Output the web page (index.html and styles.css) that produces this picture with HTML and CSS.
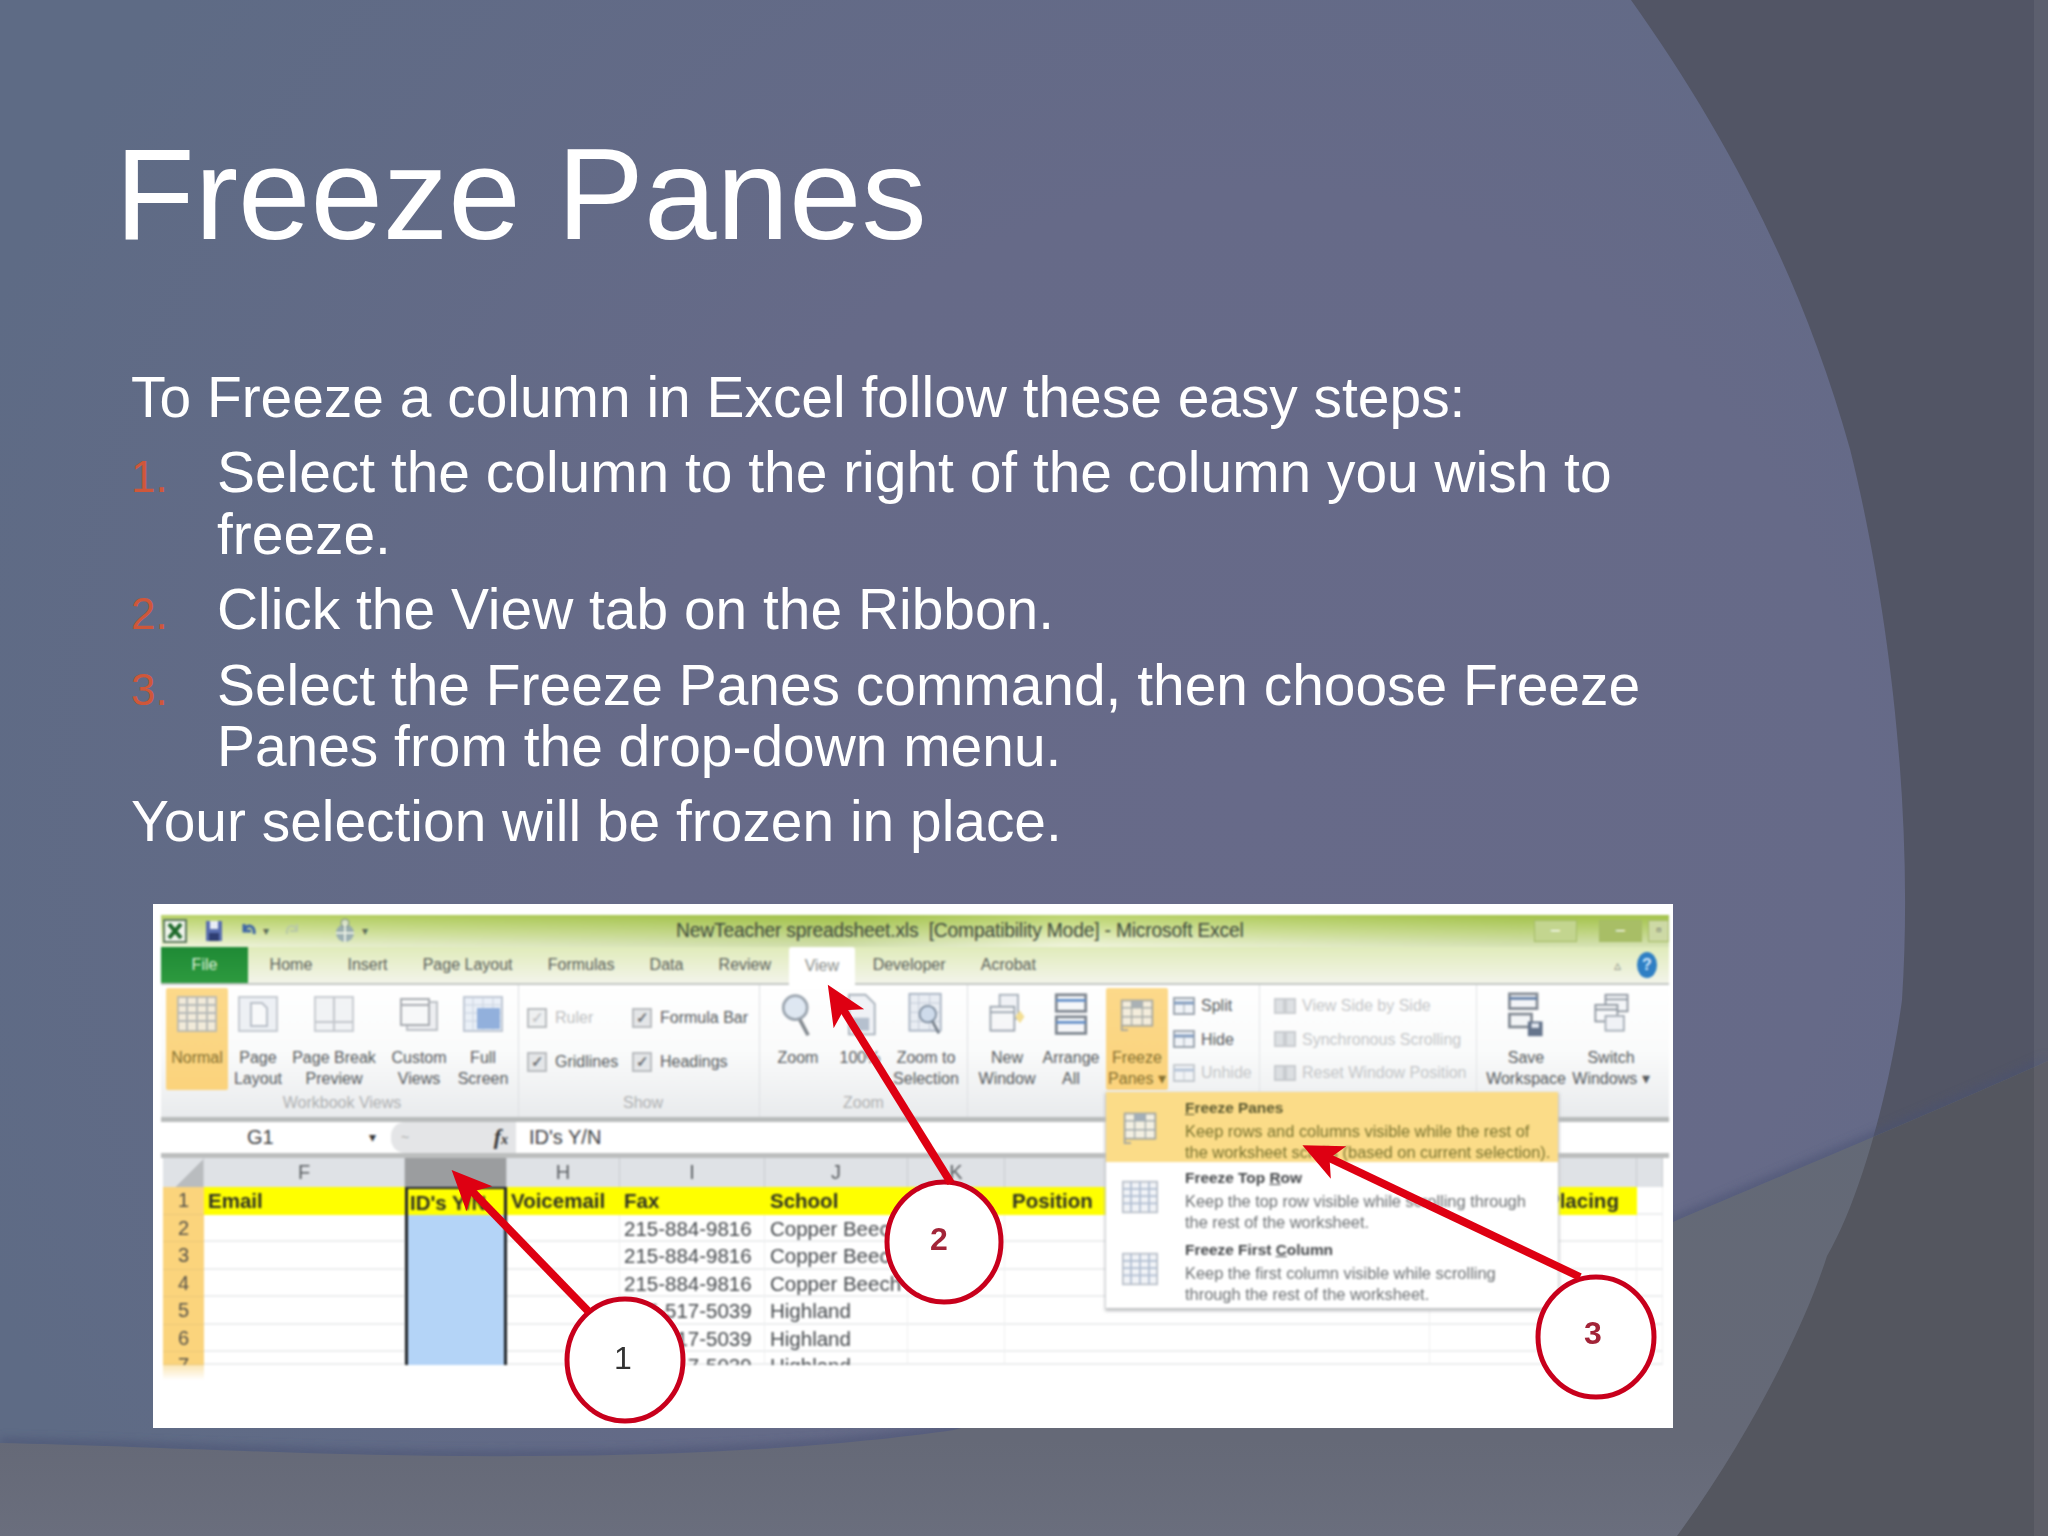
FILE: index.html
```html
<!DOCTYPE html>
<html lang="en">
<head>
<meta charset="utf-8">
<title>Freeze Panes</title>
<link rel="stylesheet" href="styles.css">
</head>
<body>
<svg class="bg" viewBox="0 0 2048 1536" aria-hidden="true">
  <defs>
    <radialGradient id="base" gradientUnits="userSpaceOnUse" cx="1250" cy="800" r="1350">
      <stop offset="0" stop-color="#676a89"/><stop offset=".45" stop-color="#666a88"/><stop offset="1" stop-color="#5e6b85"/>
    </radialGradient>
    <linearGradient id="band" x1="0" y1="0" x2="0" y2="1">
      <stop offset="0" stop-color="#636976"/><stop offset=".8" stop-color="#656977"/><stop offset="1" stop-color="#6a6e7d"/>
    </linearGradient>
    <filter id="soft" x="-5%" y="-20%" width="110%" height="140%"><feGaussianBlur stdDeviation="5"/></filter>
    <clipPath id="bandClip"><path d="M0 1443C150 1446 350 1458 533 1456C700 1456 850 1445 954 1430C1200 1360 1450 1290 1673 1222C1760 1185 1950 1105 2048 1061L2048 1536L0 1536Z"/></clipPath>
  </defs>
  <rect width="2048" height="1536" fill="url(#base)"/>
  <path d="M1631 0C1720 125 1800 270 1850 449C1885 590 1915 800 1902 1000C1890 1090 1860 1200 1827 1256C1800 1340 1740 1450 1677 1536L2048 1536L2048 0Z" fill="#525565"/>
  <path d="M0 1443C150 1446 350 1458 533 1456C700 1456 850 1445 954 1430C1200 1360 1450 1290 1673 1222C1760 1185 1950 1105 2048 1061" fill="none" stroke="#4a5172" stroke-width="9" opacity=".7" filter="url(#soft)"/>
  <path d="M0 1443C150 1446 350 1458 533 1456C700 1456 850 1445 954 1430C1200 1360 1450 1290 1673 1222C1760 1185 1950 1105 2048 1061L2048 1536L0 1536Z" fill="url(#band)"/>
  <path clip-path="url(#bandClip)" d="M1631 0C1720 125 1800 270 1850 449C1885 590 1915 800 1902 1000C1890 1090 1860 1200 1827 1256C1800 1340 1740 1450 1677 1536L2048 1536L2048 0Z" fill="#54565f"/>
  <rect x="2034" width="14" height="1536" fill="#fff" opacity=".06"/>
  <symbol id="i-grid" viewBox="0 0 40 36"><rect x="1" y="1" width="38" height="34" fill="#eef1f6" stroke="#aab2bd" stroke-width="2"/><path d="M1 9H39M1 17H39M1 25H39M10 1V35M20 1V35M30 1V35" stroke="#9fb0c8" stroke-width="2" fill="none"/></symbol>
  <symbol id="i-page" viewBox="0 0 40 36"><rect x="1" y="1" width="38" height="34" fill="#e8ecf2" stroke="#b4bac3" stroke-width="2"/><path d="M13 7H24L29 12V30H13Z" fill="#f7f8fa" stroke="#a5adb8" stroke-width="2"/></symbol>
  <symbol id="i-break" viewBox="0 0 40 36"><rect x="1" y="1" width="38" height="34" fill="#eef0f3" stroke="#b8bdc4" stroke-width="2"/><path d="M20 1V35M1 26H39" stroke="#b0b5bc" stroke-width="2" fill="none"/></symbol>
  <symbol id="i-custom" viewBox="0 0 40 36"><rect x="8" y="6" width="30" height="28" fill="#e8eaee" stroke="#a8adb4" stroke-width="2"/><rect x="2" y="3" width="28" height="26" fill="#f6f7f8" stroke="#8d9299" stroke-width="2"/><path d="M2 9H30" stroke="#8d9299" stroke-width="2"/></symbol>
  <symbol id="i-full" viewBox="0 0 40 36"><rect x="1" y="1" width="38" height="34" fill="#e5ecf6" stroke="#aab5c5" stroke-width="2"/><path d="M1 9H39M1 17H39M1 25H39M10 1V35M20 1V35M30 1V35" stroke="#b7c3d4" fill="none"/><rect x="14" y="12" width="23" height="21" fill="#6f97d2"/></symbol>
  <symbol id="i-zoom" viewBox="0 0 40 50"><circle cx="17" cy="17" r="13" fill="#d9e4f0" stroke="#8b96a2" stroke-width="3"/><path d="M22 30L31 47" stroke="#70777e" stroke-width="4"/></symbol>
  <symbol id="i-100" viewBox="0 0 40 50"><path d="M8 3H26L36 13V46H8Z" fill="#eef1f5" stroke="#9aa4b0" stroke-width="2"/><path d="M12 28H30V42H12Z" fill="#a9b6c6"/></symbol>
  <symbol id="i-sel" viewBox="0 0 40 50"><rect x="2" y="2" width="34" height="40" fill="#e6ebf2" stroke="#9aa7b8" stroke-width="2"/><path d="M2 12H36M2 22H36M2 32H36M12 2V42M24 2V42" stroke="#b5c0cf" fill="none"/><circle cx="22" cy="24" r="9" fill="#c6d6e8" stroke="#6c7d91" stroke-width="2"/><path d="M27 32L34 45" stroke="#5f6a77" stroke-width="3"/></symbol>
  <symbol id="i-new" viewBox="0 0 40 50"><rect x="12" y="3" width="20" height="26" fill="#eef1f5" stroke="#9aa4b0" stroke-width="2"/><rect x="2" y="16" width="26" height="26" fill="#f5f6f8" stroke="#8d97a3" stroke-width="2"/><path d="M2 22H28" stroke="#8d97a3" stroke-width="2"/><path d="M34 20L39 27L34 34L29 27Z" fill="#f2d981"/></symbol>
  <symbol id="i-arr" viewBox="0 0 40 50"><rect x="4" y="3" width="32" height="18" fill="#f4f6f9" stroke="#68717c" stroke-width="3"/><rect x="4" y="27" width="32" height="18" fill="#f4f6f9" stroke="#68717c" stroke-width="3"/><path d="M4 9H36M4 33H36" stroke="#4a7cbf" stroke-width="3"/></symbol>
  <symbol id="i-fr" viewBox="0 0 40 40"><rect x="3" y="5" width="34" height="28" fill="#f2f5f9" stroke="#8d98a6" stroke-width="2"/><path d="M3 13H37M3 23H37M14 5V33M26 5V33" stroke="#8ea0b5" stroke-width="1.5" fill="none"/><rect x="14" y="5" width="12" height="8" fill="#8fa5c4"/><path d="M3 33V38H10" stroke="#8d98a6" stroke-width="2" fill="none"/></symbol>
  <symbol id="i-save" viewBox="0 0 40 50"><rect x="2" y="2" width="30" height="16" fill="#f2f4f7" stroke="#6f7883" stroke-width="3"/><path d="M2 7H32" stroke="#4a6a98" stroke-width="3"/><rect x="2" y="24" width="24" height="14" fill="#f2f4f7" stroke="#6f7883" stroke-width="3"/><rect x="22" y="32" width="16" height="16" fill="#4d5e79"/><rect x="26" y="34" width="8" height="5" fill="#dfe5ee"/></symbol>
  <symbol id="i-sw" viewBox="0 0 40 50"><rect x="14" y="3" width="24" height="18" fill="#f2f4f7" stroke="#7e8792" stroke-width="2"/><rect x="3" y="14" width="24" height="18" fill="#f7f8fa" stroke="#7e8792" stroke-width="2"/><rect x="14" y="26" width="20" height="16" fill="#eef1f5" stroke="#98a1ab" stroke-width="2"/><path d="M3 19H27M14 8H38" stroke="#7e8792" stroke-width="2"/></symbol>
  <symbol id="i-mini" viewBox="0 0 22 18"><rect x="1" y="1" width="20" height="16" fill="#eef2f7" stroke="#7f8a97" stroke-width="2"/><path d="M1 6H21" stroke="#5b7dab" stroke-width="3"/><path d="M11 6V17" stroke="#7f8a97"/></symbol>
  <symbol id="i-dbl" viewBox="0 0 22 18"><rect x="1" y="2" width="9" height="14" fill="#d4d8dc" stroke="#b9bdc2" stroke-width="2"/><rect x="12" y="2" width="9" height="14" fill="#d4d8dc" stroke="#b9bdc2" stroke-width="2"/></symbol>
  <symbol id="i-excel" viewBox="0 0 24 24"><rect x="1" y="1" width="22" height="22" fill="#eef3ea" stroke="#5d7a5d" stroke-width="2"/><path d="M6 5L18 19M18 5L6 19" stroke="#1f6a2c" stroke-width="4"/></symbol>
  <symbol id="i-disk" viewBox="0 0 18 22"><rect x="1" y="1" width="16" height="20" fill="#5a6fb0"/><rect x="5" y="1" width="8" height="8" fill="#e8ecf5"/><rect x="4" y="13" width="10" height="8" fill="#2f3e73"/></symbol>
  <symbol id="i-undo" viewBox="0 0 18 22"><path d="M4 4L4 11L11 11M4 11C7 3 15 5 14 14" fill="none" stroke="#3f66a6" stroke-width="3"/></symbol>
  <symbol id="i-redo" viewBox="0 0 18 22"><path d="M14 4L14 11L7 11M14 11C11 3 3 5 4 14" fill="none" stroke="#b9c8a8" stroke-width="2"/></symbol>
  <symbol id="i-print" viewBox="0 0 24 28"><circle cx="12" cy="16" r="9" fill="#8ea3b5"/><circle cx="12" cy="6" r="4" fill="#dfe6d8" stroke="#68788a"/><path d="M3 16H21M12 7V25" stroke="#eef2f5" stroke-width="2"/></symbol>
</svg>

<main class="slide">
  <h1 class="title">Freeze Panes</h1>
  <section class="body">
    <p>To Freeze a column in Excel follow these easy steps:</p>
    <ol class="steps">
      <li><span class="num">1.</span><span>Select the column to the right of the column you wish to freeze.</span></li>
      <li><span class="num">2.</span><span>Click the View tab on the Ribbon.</span></li>
      <li><span class="num">3.</span><span>Select the Freeze Panes command, then choose Freeze Panes from the drop-down menu.</span></li>
    </ol>
    <p>Your selection will be frozen in place.</p>
  </section>

  <figure class="shot">
    <div class="win">
      <div class="titlebar">
        <svg class="q q-excel"><use href="#i-excel"/></svg>
        <svg class="q q-disk"><use href="#i-disk"/></svg>
        <svg class="q q-undo"><use href="#i-undo"/></svg><span class="caret">▾</span>
        <svg class="q q-redo"><use href="#i-redo"/></svg>
        <svg class="q q-print"><use href="#i-print"/></svg><span class="caret">▾</span>
        <span class="wintitle">NewTeacher spreadsheet.xls&nbsp; [Compatibility Mode] - Microsoft Excel</span>
        <span class="ctl ctl-a">–</span><span class="ctl ctl-b">–</span><span class="ctl ctl-c">▫</span>
      </div>
      <div class="tabs">
        <span class="file">File</span>
        <span class="tab first">Home</span><span class="tab">Insert</span><span class="tab">Page Layout</span><span class="tab">Formulas</span><span class="tab">Data</span><span class="tab">Review</span><span class="tab active">View</span><span class="tab">Developer</span><span class="tab">Acrobat</span>
        <span class="tabicons"><span class="up">▵</span><span class="help">?</span></span>
      </div>

      <div class="ribbon">
        <div class="group g-wb">
          <div class="items">
            <div class="item w62 on"><svg class="ic"><use href="#i-grid"/></svg><span class="lbl">Normal</span></div>
            <div class="item w60"><svg class="ic"><use href="#i-page"/></svg><span class="lbl">Page<br>Layout</span></div>
            <div class="item w92"><svg class="ic"><use href="#i-break"/></svg><span class="lbl">Page Break<br>Preview</span></div>
            <div class="item w78"><svg class="ic"><use href="#i-custom"/></svg><span class="lbl">Custom<br>Views</span></div>
            <div class="item w50"><svg class="ic"><use href="#i-full"/></svg><span class="lbl">Full<br>Screen</span></div>
          </div>
          <div class="gname">Workbook Views</div>
        </div>
        <div class="group g-show">
          <div class="checks">
            <label class="chk dim"><span class="box">✓</span>Ruler</label>
            <label class="chk"><span class="box">✓</span>Formula Bar</label>
            <label class="chk"><span class="box">✓</span>Gridlines</label>
            <label class="chk"><span class="box">✓</span>Headings</label>
          </div>
          <div class="gname">Show</div>
        </div>
        <div class="group g-zoom">
          <div class="items">
            <div class="item w76"><svg class="ic tall"><use href="#i-zoom"/></svg><span class="lbl">Zoom</span></div>
            <div class="item w48"><svg class="ic tall"><use href="#i-100"/></svg><span class="lbl">100%</span></div>
            <div class="item w84"><svg class="ic tall"><use href="#i-sel"/></svg><span class="lbl">Zoom to<br>Selection</span></div>
          </div>
          <div class="gname">Zoom</div>
        </div>
        <div class="group g-win">
          <div class="items">
            <div class="item w70"><svg class="ic tall"><use href="#i-new"/></svg><span class="lbl">New<br>Window</span></div>
            <div class="item w58"><svg class="ic tall"><use href="#i-arr"/></svg><span class="lbl">Arrange<br>All</span></div>
            <div class="item w62 on gapl"><svg class="ic"><use href="#i-fr"/></svg><span class="lbl">Freeze<br>Panes ▾</span></div>
            <div class="small s-a">
              <div class="sm"><svg><use href="#i-mini"/></svg>Split</div>
              <div class="sm"><svg><use href="#i-mini"/></svg>Hide</div>
              <div class="sm dim"><svg><use href="#i-mini"/></svg>Unhide</div>
            </div>
            <div class="small s-b dim">
              <div class="sm"><svg><use href="#i-dbl"/></svg>View Side by Side</div>
              <div class="sm"><svg><use href="#i-dbl"/></svg>Synchronous Scrolling</div>
              <div class="sm"><svg><use href="#i-dbl"/></svg>Reset Window Position</div>
            </div>
            <div class="item w92"><svg class="ic tall"><use href="#i-save"/></svg><span class="lbl">Save<br>Workspace</span></div>
            <div class="item w78"><svg class="ic tall"><use href="#i-sw"/></svg><span class="lbl">Switch<br>Windows ▾</span></div>
          </div>
        </div>
      </div>

      <div class="fbar">
        <span class="namebox">G1</span><span class="caret dark">▾</span>
        <span class="fxpill"><span class="fxdot">~</span><em class="fx">f<small>x</small></em></span>
        <span class="ftext">ID's Y/N</span>
      </div>

      <div class="sheet">
        <div class="ch corner"></div><div class="ch">F</div><div class="ch sel"></div><div class="ch">H</div><div class="ch">I</div><div class="ch">J</div><div class="ch">K</div><div class="ch"></div><div class="ch"></div><div class="ch"></div>

        <div class="rh">1</div><div class="c y">Email</div><div class="c y gc">ID's Y/N</div><div class="c y">Voicemail</div><div class="c y">Fax</div><div class="c y j">School</div><div class="c y"></div><div class="c y pos">Position</div><div class="c y plc">Placing</div><div class="c"></div>

        <div class="rh">2</div><div class="c"></div><div class="c gc b"></div><div class="c"></div><div class="c t">215-884-9816</div><div class="c t j">Copper Beech</div><div class="c"></div><div class="c"></div><div class="c"></div><div class="c"></div>
        <div class="rh">3</div><div class="c"></div><div class="c gc b"></div><div class="c"></div><div class="c t">215-884-9816</div><div class="c t j">Copper Beech</div><div class="c"></div><div class="c"></div><div class="c"></div><div class="c"></div>
        <div class="rh">4</div><div class="c"></div><div class="c gc b"></div><div class="c"></div><div class="c t">215-884-9816</div><div class="c t j">Copper Beech</div><div class="c"></div><div class="c"></div><div class="c"></div><div class="c"></div>
        <div class="rh">5</div><div class="c"></div><div class="c gc b"></div><div class="c"></div><div class="c t">215-517-5039</div><div class="c t j">Highland</div><div class="c"></div><div class="c"></div><div class="c"></div><div class="c"></div>
        <div class="rh">6</div><div class="c"></div><div class="c gc b"></div><div class="c"></div><div class="c t">215-517-5039</div><div class="c t j">Highland</div><div class="c"></div><div class="c"></div><div class="c"></div><div class="c"></div>
        <div class="rh">7</div><div class="c"></div><div class="c gc b"></div><div class="c"></div><div class="c t">215-517-5039</div><div class="c t j">Highland</div><div class="c"></div><div class="c"></div><div class="c"></div><div class="c"></div>
      </div>
      <div class="rowfade"></div>
    </div>

    <div class="menu">
      <div class="mi hot"><svg class="mic"><use href="#i-fr"/></svg><div><b><u>F</u>reeze Panes</b><span>Keep rows and columns visible while the rest of</span><span>the worksheet scrolls (based on current selection).</span></div></div>
      <div class="mi"><svg class="mic"><use href="#i-grid"/></svg><div><b>Freeze Top <u>R</u>ow</b><span>Keep the top row visible while scrolling through</span><span>the rest of the worksheet.</span></div></div>
      <div class="mi"><svg class="mic"><use href="#i-grid"/></svg><div><b>Freeze First <u>C</u>olumn</b><span>Keep the first column visible while scrolling</span><span>through the rest of the worksheet.</span></div></div>
    </div>

    <svg class="marks" viewBox="153 904 1520 524">
      <defs>
        <marker id="head" markerUnits="userSpaceOnUse" markerWidth="44" markerHeight="44" viewBox="0 0 44 44" refX="17" refY="22" orient="auto"><path d="M42 22L2 4L12 22L2 40Z" fill="#de0012"/></marker>
      </defs>
      <ellipse cx="625" cy="1360" rx="58" ry="61" class="ring"/>
      <ellipse cx="944" cy="1242" rx="57" ry="60" class="ring"/>
      <ellipse cx="1596" cy="1337" rx="58" ry="60" class="ring"/>
      <line x1="589" y1="1312" x2="469" y2="1188" class="arrow"/>
      <line x1="951" y1="1183" x2="841" y2="1006" class="arrow"/>
      <line x1="1580" y1="1277" x2="1325" y2="1156" class="arrow"/>
      <text x="623" y="1369" class="n n1">1</text>
      <text x="939" y="1250" class="n">2</text>
      <text x="1593" y="1344" class="n">3</text>
    </svg>
  </figure>
</main>
</body>
</html>
```
FILE: styles.css
```css
* { box-sizing: border-box; }
html, body { margin: 0; padding: 0; }
body { position: relative; width: 2048px; height: 1536px; overflow: hidden; background: #666a88; font-family: "Liberation Sans", Arial, sans-serif; color: #fff; }
.bg { position: absolute; left: 0; top: 0; width: 2048px; height: 1536px; }

.slide { position: relative; padding: 129px 0 0 115px; }
.title { margin: 0; font-size: 130.4px; line-height: 130px; font-weight: 400; color: #fff; }
.body { margin: 108px 0 0 16px; width: 1540px; font-size: 56.9px; line-height: 61.4px; }
.body p { margin: 0; }
.steps { list-style: none; margin: 14px 0; padding: 0; display: flex; flex-direction: column; gap: 14px; }
.steps li { display: flex; align-items: baseline; }
.num { flex: 0 0 86px; font-size: 44px; line-height: 42px; color: #cf573a; }

/* embedded screenshot */
.shot { position: relative; margin: 51px 0 0 38px; width: 1520px; height: 524px; background: #fff; padding: 11px 4px 0 8px; color: #5c6064; overflow: hidden; }
.win { filter: blur(.8px); font-size: 16px; }

.titlebar { height: 32px; display: flex; align-items: center; padding-left: 2px; background: linear-gradient(90deg, rgba(255,255,255,.12), rgba(120,160,40,.25) 45%, rgba(255,255,255,.15) 60%, rgba(120,160,40,.2) 90%), linear-gradient(#aecb52, #d2e29a 55%, #eef3da); }
.q { display: block; flex: none; }
.q-excel { width: 24px; height: 24px; margin-right: 18px; }
.q-disk { width: 18px; height: 22px; margin-right: 17px; }
.q-undo { width: 18px; height: 22px; }
.q-redo { width: 18px; height: 22px; margin-left: 14px; margin-right: 32px; }
.q-print { width: 24px; height: 28px; opacity: .8; }
.caret { font-size: 12px; line-height: 1; color: #5a6a5a; margin-left: 5px; }
.wintitle { margin-left: 308px; font-size: 19.3px; color: #3f4a3c; white-space: pre; letter-spacing: -.2px; }
.ctl { display: block; height: 22px; line-height: 18px; text-align: center; font-size: 16px; color: #fff; border: 1px solid #a4bb66; background: #c3d58f; }
.ctl-a { width: 43px; margin-left: auto; }
.ctl-b { width: 43px; margin-left: 22px; background: #a8be66; }
.ctl-c { width: 21px; margin-left: 6px; color: #666; background: #cdd9a5; }

.tabs { height: 38px; display: flex; align-items: center; background: linear-gradient(#e0ebba, #f3f4ea); border-bottom: 2px solid #c3c7c3; font-size: 16px; color: #5a6059; }
.file { align-self: stretch; width: 87px; display: flex; align-items: center; justify-content: center; background: linear-gradient(#1f8a35, #2d9a3f); color: #dff0da; }
.tab { padding: 0 17.6px; }
.tab.first { margin-left: 4px; }
.tab.active { align-self: stretch; display: flex; align-items: center; background: #fff; margin-bottom: -2px; padding: 0 16px; border-radius: 3px 3px 0 0; color: #8b8f8b; }
.tabicons { margin-left: auto; margin-right: 12px; display: flex; align-items: center; gap: 16px; }
.up { font-size: 14px; color: #8a8d85; }
.help { width: 20px; height: 26px; border-radius: 50%; background: #2f7fc4; color: #d8ecff; font-weight: 700; text-align: center; line-height: 26px; font-size: 16px; }

.ribbon { height: 132px; display: flex; background: linear-gradient(#fff, #fafbfb 50%, #e9ebed); line-height: 21px; }
.group { position: relative; display: flex; flex-direction: column; border-right: 1px solid #dddfe2; }
.gname { margin-top: auto; height: 25px; text-align: center; color: #aeb0b1; font-size: 16px; line-height: 22px; }
.items { display: flex; height: 107px; }
.g-wb { width: 358px; padding-left: 5px; }
.g-show { width: 241px; padding-left: 8px; }
.g-zoom { width: 208px; }
.g-win { width: 691px; padding-left: 4px; border-right: 0; }
.item { display: flex; flex-direction: column; align-items: center; flex: none; padding-top: 11px; text-align: center; }
.item.on { background: linear-gradient(#fcd98a, #fbd37c); margin-top: 3px; padding-top: 8px; height: 102px; border-radius: 2px; }
.gapl { margin-left: 6px; }
.w48 { width: 48px; } .w50 { width: 50px; } .w58 { width: 58px; } .w60 { width: 60px; } .w62 { width: 62px; } .w70 { width: 70px; } .w76 { width: 76px; } .w78 { width: 78px; } .w84 { width: 84px; } .w92 { width: 92px; }
.ic { display: block; width: 40px; height: 36px; margin-bottom: 15px; flex: none; opacity: .75; }
.ic.tall { height: 46px; margin-top: -4px; margin-bottom: 9px; opacity: .85; }
.lbl { display: block; white-space: nowrap; color: #55595c; }
.on .lbl { color: #85702f; }

.checks { display: grid; grid-template-columns: 105px 1fr; grid-auto-rows: 44px; padding-top: 11px; }
.chk { display: flex; align-items: center; gap: 8px; color: #55595c; }
.chk.dim { color: #bcbec0; }
.box { display: block; width: 20px; height: 20px; border: 2px solid #b9bcbf; background: #e4e6e8; color: #6b6e72; text-align: center; line-height: 16px; font-size: 15px; font-weight: 700; }
.dim .box { color: #c3c5c7; background: #eef0f1; }

.small { display: flex; flex-direction: column; gap: 0; padding-top: 4px; margin-left: 5px; flex: none; }
.s-a { width: 87px; border-right: 1px solid #e2e4e6; height: 107px; }
.s-b { width: 217px; margin-left: 0; padding-left: 14px; border-right: 1px solid #e2e4e6; height: 107px; margin-right: 3px; }
.sm { height: 33.5px; display: flex; align-items: center; gap: 6px; color: #55595c; white-space: nowrap; }
.sm svg { display: block; width: 22px; height: 18px; flex: none; opacity: .75; }
.dim.small .sm, .sm.dim { color: #c3c5c7; }
.sm.dim svg { opacity: .4; }

.fbar { height: 41px; display: flex; align-items: center; border-top: 5px solid #b8bbbb; border-bottom: 5px solid #bcbebe; background: #fff; font-size: 20px; color: #3d4043; }
.namebox { margin-left: 86px; width: 122px; }
.caret.dark { color: #333; margin-left: 0; width: 22px; font-size: 14px; }
.fxpill { width: 125px; align-self: stretch; display: flex; align-items: center; justify-content: space-between; padding: 0 8px 0 10px; background: #e4e5e7; border-radius: 14px 0 0 14px; color: #555; }
.fxdot { color: #aaa; font-size: 14px; }
.fx { font-family: "Liberation Serif", serif; font-size: 22px; color: #333; font-weight: 700; }
.fx small { font-size: 14px; }
.ftext { margin-left: 13px; }

.sheet { margin-left: 2px; display: grid; grid-template-columns: 41px 201px 102px 113px 145px 143px 97px 425px 207px 26px; grid-template-rows: 29px 28px repeat(5, 27.5px) 13px; height: 207px; overflow: hidden; font-size: 20.5px; line-height: 27px; white-space: nowrap; position: relative; }
.ch { background: #dfe2e6; border-right: 1px solid #c9ccd0; text-align: center; font-size: 20px; line-height: 29px; color: #5a5e62; }
.ch.sel { background: #9b9d9f; }
.corner { background: linear-gradient(135deg, #dfe2e6 60%, #b9bcbf 60%); }
.rh { background: #fbd47c; border-bottom: 1px solid #ecc87a; text-align: center; color: #55524a; font-size: 20px; }
.c { padding-left: 4px; border-bottom: 2px solid #eceeef; border-right: 1px solid #eff0f1; color: #43474b; overflow: visible; }
.c.y { background: #ffff00; border: 0; font-weight: 700; color: #2e3222; }
.c.j { padding-left: 5px; }
.c.gc { padding-left: 5px; border-left: 3px solid #22262a; border-right: 3px solid #22262a; border-bottom: 0; }
.c.y.gc { border-top: 2px solid #22262a; padding-left: 2px; }
.c.b { background: #b4d4f7; }
.pos { padding-left: 7px !important; }
.plc { padding-left: 116px !important; }
.rowfade { margin-left: 2px; width: 41px; height: 15px; background: linear-gradient(#fbe6b4, #fff); }

.menu { position: absolute; left: 953px; top: 188px; width: 452px; height: 216px; background: #fff; box-shadow: 0 2px 3px 1px #bcbec0; filter: blur(.8px); font-size: 16.4px; line-height: 21.5px; color: #6c7073; }
.mi { height: 72px; display: flex; padding: 3px 0 0 16px; gap: 27px; }
.mi.hot { height: 70px; background: #fbdc88; color: #7a7430; }
.mi b { display: block; line-height: 26px; color: #44474a; font-size: 15.4px; }
.mi.hot b { color: #5c5a30; }
.mi span { display: block; white-space: nowrap; }
.mic { display: block; width: 36px; height: 36px; margin-top: 14px; flex: none; opacity: .8; }

.marks { position: absolute; left: 0; top: 0; width: 1520px; height: 524px; filter: blur(.6px); }
.ring { fill: #fff; stroke: #c8001c; stroke-width: 5; }
.arrow { stroke: #de0012; stroke-width: 8; marker-end: url(#head); }
.n { font-family: "Liberation Sans", sans-serif; font-size: 32px; font-weight: 700; fill: #a22438; text-anchor: middle; }
.n1 { font-weight: 400; fill: #333; }
```
